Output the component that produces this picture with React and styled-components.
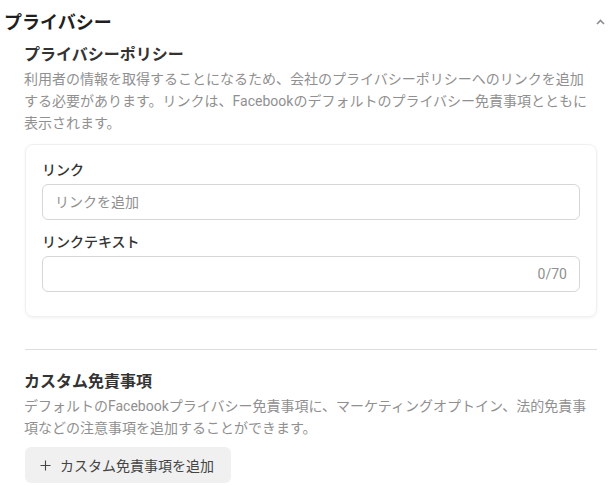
import React from 'react';
import styled, { createGlobalStyle } from 'styled-components';

const GlobalStyle = createGlobalStyle`
  body {
    margin: 0;
    background: #ffffff;
    font-family: Roboto, "Noto Sans CJK JP", sans-serif;
    color: #333333;
  }
`;

const Page = styled.div`
  width: 616px;
`;

const Header = styled.div`
  display: flex;
  align-items: center;
  justify-content: space-between;
  height: 42px;
  padding: 0 11px 0 4px;
`;

const Title = styled.h2`
  margin: 0;
  font-size: 18px;
  font-weight: 700;
  color: #1f1f1f;
`;

const Chevron = styled.svg`
  width: 9px;
  height: 6px;
  margin-top: 2px;
`;

const Section = styled.section`
  padding: 0 19px 0 25px;
`;

const SubTitle = styled.h3`
  margin: 2px 0 0 -1px;
  font-size: 16px;
  line-height: 22px;
  font-weight: 700;
  color: #333333;
`;

const Desc = styled.p`
  margin: 2px 0 0 -1px;
  font-size: 14px;
  line-height: 22px;
  color: #909090;
`;

const Card = styled.div`
  margin-top: 10px;
  padding: 15px 16px 24px;
  border: 1px solid #f0f0f0;
  border-radius: 8px;
  box-shadow: 0 1px 3px rgba(0, 0, 0, 0.06);
  display: flex;
  flex-direction: column;
  gap: 12px;
`;

const Field = styled.div`
  display: flex;
  flex-direction: column;
  gap: 4px;
`;

const Label = styled.label`
  font-size: 14px;
  line-height: 20px;
  font-weight: 500;
  color: #333333;
`;

const InputBox = styled.div`
  display: flex;
  align-items: center;
  height: 36px;
  box-sizing: border-box;
  padding: 0 12px;
  border: 1px solid #d6d6d6;
  border-radius: 6px;
  background: #ffffff;
`;

const Input = styled.input`
  flex: 1;
  min-width: 0;
  border: none;
  outline: none;
  padding: 0;
  font-family: inherit;
  font-size: 14px;
  color: #333333;
  background: transparent;

  &::placeholder {
    color: #909090;
  }
`;

const Counter = styled.span`
  font-size: 14px;
  color: #909090;
`;

const Divider = styled.hr`
  margin: 32px 0 0;
  border: none;
  border-top: 1px solid #dddddd;
`;

const Heading = styled.h3`
  margin: 21px 0 0 -1px;
  font-size: 16px;
  line-height: 22px;
  font-weight: 700;
  color: #333333;
`;

const AddButton = styled.button`
  margin-top: 8px;
  display: inline-flex;
  align-items: center;
  gap: 9px;
  height: 36px;
  padding: 0 17px 0 15px;
  border: none;
  border-radius: 6px;
  background: #f0f0f0;
  font-family: inherit;
  font-size: 14px;
  color: #444444;
`;

const Plus = styled.svg`
  width: 11px;
  height: 11px;
`;

const App = () => {
  return (
    <Page>
      <GlobalStyle />
      <Header>
        <Title>プライバシー</Title>
        <Chevron viewBox="0 0 9 6">
          <path d="M1 5 L4.5 1.5 L8 5" fill="none" stroke="#8a8d91" strokeWidth="1.6" />
        </Chevron>
      </Header>
      <Section>
        <SubTitle>プライバシーポリシー</SubTitle>
        <Desc>
          利用者の情報を取得することになるため、会社のプライバシーポリシーへのリンクを追加する必要があります。リンクは、Facebookのデフォルトのプライバシー免責事項とともに表示されます。
        </Desc>
        <Card>
          <Field>
            <Label>リンク</Label>
            <InputBox>
              <Input placeholder="リンクを追加" />
            </InputBox>
          </Field>
          <Field>
            <Label>リンクテキスト</Label>
            <InputBox>
              <Input />
              <Counter>0/70</Counter>
            </InputBox>
          </Field>
        </Card>
        <Divider />
        <Heading>カスタム免責事項</Heading>
        <Desc>
          デフォルトのFacebookプライバシー免責事項に、マーケティングオプトイン、法的免責事項などの注意事項を追加することができます。
        </Desc>
        <AddButton>
          <Plus viewBox="0 0 11 11">
            <path d="M5.5 0.5 V10.5 M0.5 5.5 H10.5" stroke="#444444" strokeWidth="1.1" fill="none" />
          </Plus>
          カスタム免責事項を追加
        </AddButton>
      </Section>
    </Page>
  );
};

export default App;
